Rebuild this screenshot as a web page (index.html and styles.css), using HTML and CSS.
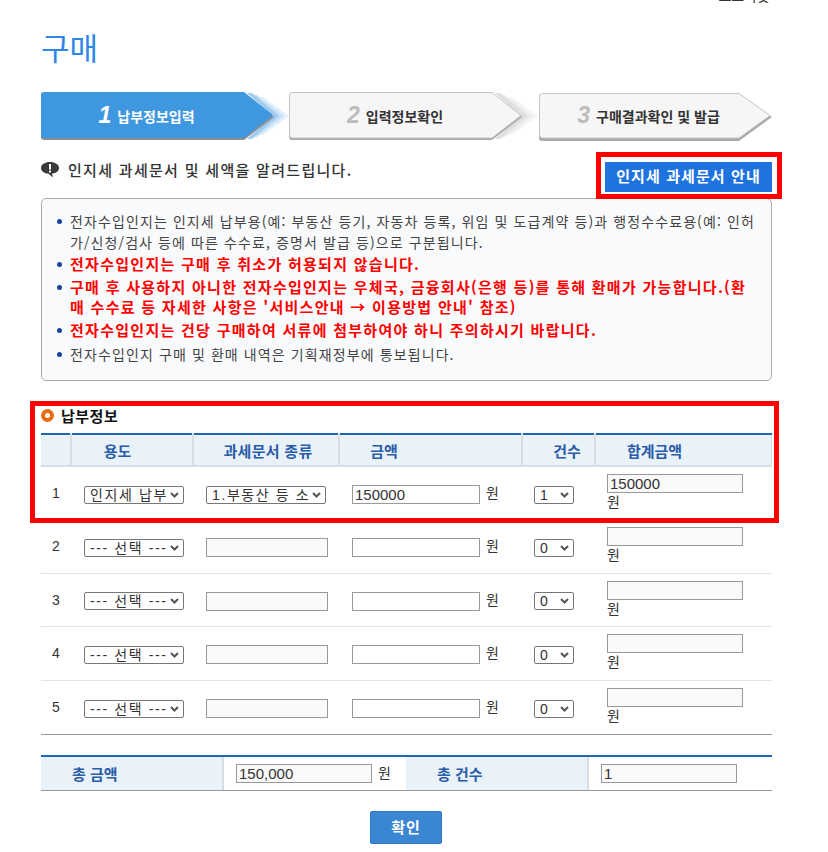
FILE: index.html
```html
<!DOCTYPE html>
<html lang="ko">
  <head>
    <meta charset="utf-8">
    <title>구매</title>
    <link rel="stylesheet" href="styles.css">
  </head>
  <body>
    <div id="app">
      <div class="crumb">로그아웃</div>
      <h1 class="title">구매</h1>

      <div class="steps">
        <div class="step step-on">
          <svg class="step-bg" width="248" height="50" viewBox="0 0 248 50">
            <polygon points="214,5 222,5 248,24 222,43 214,43 232,24" fill="#e3f0fb"/>
            <polygon points="210,3 216,3 243,24 216,45 210,45 232,24" fill="#c6e0f7"/>
            <polygon points="206,1 211,1 238,24 211,47 206,47 232,24" fill="#9fcbf1"/>
            <path d="M3 3 H203 L233 25 L203 48 H3 Q0 48 0 45 V3 Q0 3 3 3 Z" fill="#8a8f94"/>
            <path d="M3 0 H203 L232 23 L203 46 H3 Q0 46 0 43 V3 Q0 0 3 0 Z" fill="#3f98df"/>
          </svg>
          <div class="step-label"><b class="step-num">1</b>납부정보입력</div>
        </div>
        <div class="step">
          <svg class="step-bg" width="249" height="50" viewBox="0 0 249 50">
            <polygon points="214,5 222,5 249,24 222,43 214,43 232,24" fill="#f4f4f4"/>
            <polygon points="210,3 216,3 244,24 216,45 210,45 232,24" fill="#ececec"/>
            <polygon points="206,1 211,1 239,24 211,47 206,47 232,24" fill="#dfdfdf"/>
            <path d="M3 3 H203 L233 25 L203 48 H3 Q0 48 0 45 V3 Q0 3 3 3 Z" fill="#a9a9a9"/>
            <path d="M3.5 .5 H203 L232 23.500 L203 46 H3.500 Q.5 46 .5 43 V3.500 Q.5 .5 3.500 .5 Z" fill="#f6f6f6" stroke="#c4c4c4"/>
          </svg>
          <div class="step-label"><b class="step-num">2</b>입력정보확인</div>
        </div>
        <div class="step step-last">
          <svg class="step-bg" width="233" height="50" viewBox="0 0 233 50">
            <path d="M3 3 H200 L233 25 L200 49 H3 Q0 49 0 46 V3 Q0 3 3 3 Z" fill="#a9a9a9"/>
            <path d="M3.500 1.500 H200 L231 23.500 L200 46 H3.500 Q.5 46 .5 43 V4.500 Q.5 1.500 3.500 1.500 Z" fill="#f6f6f6" stroke="#c4c4c4"/>
          </svg>
          <div class="step-label"><b class="step-num">3</b>구매결과확인 및 발급</div>
        </div>
      </div>

      <div class="notice">
        <div class="notice-text">
          <svg class="notice-icon" width="18" height="16" viewBox="0 0 18 16">
            <path d="M9 0 C14 0 18 2.400 18 6 C18 9.400 14.500 11.500 11 11.500 L12 15.500 L7.500 11.700 C3.500 11.500 0 9.400 0 6 C0 2.400 4 0 9 0 Z" fill="#3a3a3a"/>
            <rect x="8" y="2" width="2" height="5.500" fill="#fff"/>
            <rect x="8" y="8.500" width="2" height="2" fill="#fff"/>
          </svg>
          인지세 과세문서 및 세액을 알려드립니다.
        </div>
        <a class="btn-guide">인지세 과세문서 안내</a>
      </div>

      <div class="infobox">
        <ul>
          <li>전자수입인지는 인지세 납부용(예: 부동산 등기, 자동차 등록, 위임 및 도급계약 등)과 행정수수료용(예: 인허<br>가/신청/검사 등에 따른 수수료, 증명서 발급 등)으로 구분됩니다.</li>
          <li class="warn">전자수입인지는 구매 후 취소가 허용되지 않습니다.</li>
          <li class="warn">구매 후 사용하지 아니한 전자수입인지는 우체국, 금융회사(은행 등)를 통해 환매가 가능합니다.(환<br>매 수수료 등 자세한 사항은 '서비스안내 → 이용방법 안내' 참조)</li>
          <li class="warn">전자수입인지는 건당 구매하여 서류에 첨부하여야 하니 주의하시기 바랍니다.</li>
          <li>전자수입인지 구매 및 환매 내역은 기획재정부에 통보됩니다.</li>
        </ul>
      </div>

      <h2 class="sub"><span class="sub-dot"></span>납부정보</h2>

      <table class="pay">
        <colgroup>
          <col class="c-no"><col class="c-use"><col class="c-kind"><col class="c-amt"><col class="c-cnt"><col class="c-sum">
        </colgroup>
        <thead>
          <tr>
            <th></th>
            <th class="th-use">용도</th>
            <th class="th-kind">과세문서 종류</th>
            <th class="th-amt">금액</th>
            <th class="th-cnt">건수</th>
            <th class="th-sum">합계금액</th>
          </tr>
        </thead>
        <tbody>
          <tr>
            <td class="no">1</td>
            <td><select class="sel-use"><option>인지세 납부</option></select></td>
            <td><select class="sel-kind"><option>1.부동산 등 소유권 이전</option></select></td>
            <td><input class="in-amt" value="150000"> 원</td>
            <td><select class="sel-cnt"><option>1</option></select></td>
            <td class="sum"><input class="in-sum" value="150000" readonly><br>원</td>
          </tr>
          <tr>
            <td class="no">2</td>
            <td><select class="sel-use"><option>--- 선택 ---</option></select></td>
            <td><input class="in-kind" readonly></td>
            <td><input class="in-amt"> 원</td>
            <td><select class="sel-cnt"><option>0</option></select></td>
            <td class="sum"><input class="in-sum" readonly><br>원</td>
          </tr>
          <tr>
            <td class="no">3</td>
            <td><select class="sel-use"><option>--- 선택 ---</option></select></td>
            <td><input class="in-kind" readonly></td>
            <td><input class="in-amt"> 원</td>
            <td><select class="sel-cnt"><option>0</option></select></td>
            <td class="sum"><input class="in-sum" readonly><br>원</td>
          </tr>
          <tr>
            <td class="no">4</td>
            <td><select class="sel-use"><option>--- 선택 ---</option></select></td>
            <td><input class="in-kind" readonly></td>
            <td><input class="in-amt"> 원</td>
            <td><select class="sel-cnt"><option>0</option></select></td>
            <td class="sum"><input class="in-sum" readonly><br>원</td>
          </tr>
          <tr>
            <td class="no">5</td>
            <td><select class="sel-use"><option>--- 선택 ---</option></select></td>
            <td><input class="in-kind" readonly></td>
            <td><input class="in-amt"> 원</td>
            <td><select class="sel-cnt"><option>0</option></select></td>
            <td class="sum"><input class="in-sum" readonly><br>원</td>
          </tr>
        </tbody>
      </table>

      <div class="totals">
        <div class="t-label">총 금액</div>
        <div class="t-val"><input class="in-total" value="150,000" readonly> <span class="t-unit">원</span></div>
        <div class="t-label">총 건수</div>
        <div class="t-val"><input class="in-total" value="1" readonly></div>
      </div>

      <div class="actions"><a class="btn-ok">확인</a></div>

      <div class="mark mark-guide"></div>
      <div class="mark mark-table"></div>
    </div>
  </body>
</html>
```

FILE: styles.css
```css
* {
  box-sizing: border-box;
}

html, body {
  margin: 0;
  padding: 0;
  background: #fff;
}

body {
  font-family: "Noto Sans CJK KR", "Liberation Sans", sans-serif;
  font-size: 14px;
  color: #333;
  overflow: hidden;
}

#app {
  position: relative;
  width: 828px;
  height: 852px;
  padding: 0 56px 0 41px;
  overflow: hidden;
}

.crumb {
  height: 8px;
  margin-top: -5px;
  margin-right: 2px;
  line-height: 0;
  font-size: 14px;
  text-align: right;
}

.title {
  margin: 24px 0 0;
  height: 65px;
  font-size: 31px;
  font-weight: 400;
  line-height: 40px;
  color: #2e86e6;
}

/* steps */
.steps {
  display: flex;
  height: 50px;
}

.step {
  display: grid;
  width: 248px;
  height: 50px;
}

.step-last {
  width: 233px;
  margin-left: 2px;
}

.step > * {
  grid-area: 1 / 1;
}

.step-label {
  z-index: 1;
  display: flex;
  align-items: center;
  justify-content: center;
  height: 47px;
  padding-right: 37px;
  font-size: 14px;
  font-weight: 700;
  color: #333;
}

.step-last .step-label {
  padding-right: 14px;
}

.step-on .step-label {
  color: #fff;
}

.step-num {
  margin-right: 6px;
  font-family: "Liberation Sans", sans-serif;
  font-size: 23px;
  font-style: italic;
  color: #bcbcbc;
}

.step-on .step-num {
  color: #fff;
}

/* notice */
.notice {
  display: flex;
  justify-content: space-between;
  align-items: flex-start;
  height: 36px;
  margin-top: 20px;
}

.notice-text {
  display: flex;
  align-items: center;
  gap: 9px;
  height: 15px;
  font-size: 15px;
  font-weight: 500;
  letter-spacing: 1.3px;
  color: #333;
}

.notice-icon {
  flex: none;
}

.btn-guide {
  display: block;
  width: 167px;
  height: 30px;
  line-height: 28px;
  background: #1e73de;
  color: #fff;
  font-size: 15px;
  font-weight: 700;
  letter-spacing: 1.1px;
  text-align: center;
  white-space: nowrap;
}

.infobox {
  height: 183px;
  padding: 12px 0 0 15px;
  background: #f9fafc;
  border: 1px solid #aaa;
  border-radius: 5px;
}

.infobox ul {
  margin: 0;
  padding: 0;
  list-style: none;
}

.infobox li {
  position: relative;
  margin-bottom: 2px;
  padding-left: 13px;
  font-size: 14px;
  line-height: 21px;
  letter-spacing: 1.1px;
  white-space: nowrap;
  color: #444;
}

.infobox li::before {
  content: "";
  position: absolute;
  left: 0;
  top: 8px;
  width: 5px;
  height: 5px;
  border-radius: 50%;
  background: #15469c;
}

.infobox li.warn {
  margin-top: -1px;
  margin-bottom: 4px;
  font-size: 15px;
  font-weight: 700;
  line-height: 20px;
  letter-spacing: 1.28px;
  color: #f00;
}

/* table */
.sub {
  display: flex;
  align-items: center;
  gap: 7px;
  height: 20px;
  margin: 24px 0 8px;
  font-size: 15px;
  font-weight: 700;
  letter-spacing: 0.5px;
  color: #111;
}

.sub-dot {
  width: 13px;
  height: 13px;
  border: 4px solid #ea6a0f;
  border-radius: 50%;
  background: #fff;
}

.pay {
  width: 731px;
  table-layout: fixed;
  border-collapse: collapse;
  border-top: 2px solid #1f66b3;
  border-bottom: 1px solid #999;
}

.c-no { width: 30px; }
.c-use { width: 122px; }
.c-kind { width: 146px; }
.c-amt { width: 183px; }
.c-cnt { width: 73px; }

.pay th {
  height: 32px;
  padding: 0;
  background: #e9f2f8;
  border-left: 2px solid #d5dee3;
  border-bottom: 2px solid #d5dee3;
  font-size: 15px;
  font-weight: 700;
  color: #2a5ca8;
}

.pay th:first-child {
  border-left: 0;
}

.pay th:last-child {
  border-right: 1px solid #d5dee3;
}

.pay .th-use {
  padding-right: 29px;
}

.pay .th-kind {
  padding-left: 4px;
  letter-spacing: 0.3px;
}

.pay .th-amt {
  padding-right: 93px;
}

.pay .th-cnt {
  padding-left: 17px;
}

.pay .th-sum {
  padding-right: 58px;
}

.pay td {
  height: 53.500px;
  padding: 0 0 0 13px;
  border-bottom: 1px solid #dfe3e6;
  font-size: 14px;
  color: #333;
  white-space: nowrap;
}

.pay tr:last-child td {
  height: 54.500px;
  border-bottom: 0;
}

.pay td.no {
  padding: 0;
  font-family: "Liberation Sans", sans-serif;
  text-align: center;
}

.pay td.sum {
  padding-bottom: 4px;
  line-height: 16px;
}

input, select {
  margin: 0;
  font-family: "Liberation Sans", "Noto Sans CJK KR", sans-serif;
  font-size: 15px;
  color: #333;
  vertical-align: middle;
}

input {
  height: 19px;
  padding: 0 2px;
  border: 1px solid #999;
  background: #fff;
  border-radius: 0;
}

input[readonly] {
  background: #f9f9f9;
}

select {
  height: 18px;
  padding: 0 14px 0 5px;
  border: 1px solid #777;
  border-radius: 2px;
  font-size: 14px;
  letter-spacing: 1.6px;
  appearance: none;
  background: #fff url("data:image/svg+xml,%3Csvg xmlns='http://www.w3.org/2000/svg' width='9' height='6'%3E%3Cpath d='M1 1 L4.500 4.500 L8 1' fill='none' stroke='%23555' stroke-width='2'/%3E%3C/svg%3E") no-repeat right 4px center;
}

.sel-use { width: 100px; }
.sel-kind { width: 120px; }
.sel-cnt { width: 40px; }
.in-kind { width: 122px; }
.in-amt { width: 128px; margin-right: 2px; }
.in-sum { width: 136px; }
.in-total { width: 136px; margin-right: 2px; }

.pay td:nth-child(5) { padding-left: 12px; }
.pay td:nth-child(6) { padding-left: 12px; }

/* totals */
.totals {
  display: grid;
  grid-template-columns: 183px 182px 183px 183px;
  height: 36px;
  margin-top: 20px;
  border-top: 2px solid #1f66b3;
  border-bottom: 1px solid #999;
}

.t-label {
  display: flex;
  align-items: center;
  padding-left: 31px;
  background: #e9f2f8;
  border-right: 2px solid #d5dee3;
  font-size: 15px;
  font-weight: 700;
  color: #2a5ca8;
}

.t-val {
  display: flex;
  align-items: center;
  gap: 4px;
  padding-left: 12px;
  font-size: 14px;
}

.t-unit {
  margin-bottom: 3px;
}

.actions {
  display: flex;
  justify-content: center;
  margin-top: 20px;
  padding-right: 1px;
}

.btn-ok {
  display: block;
  width: 72px;
  height: 33px;
  line-height: 30px;
  background: #3a86d2;
  border: 1px solid #2d78c8;
  border-radius: 2px;
  color: #fff;
  font-size: 15px;
  font-weight: 700;
  letter-spacing: 1px;
  text-align: center;
}

/* red marks drawn over the page */
.mark {
  position: absolute;
  border: 5px solid #f00;
  pointer-events: none;
}

.mark-guide {
  left: 596px;
  top: 152px;
  width: 186px;
  height: 47px;
}

.mark-table {
  left: 30px;
  top: 401px;
  width: 749px;
  height: 122px;
}
```
